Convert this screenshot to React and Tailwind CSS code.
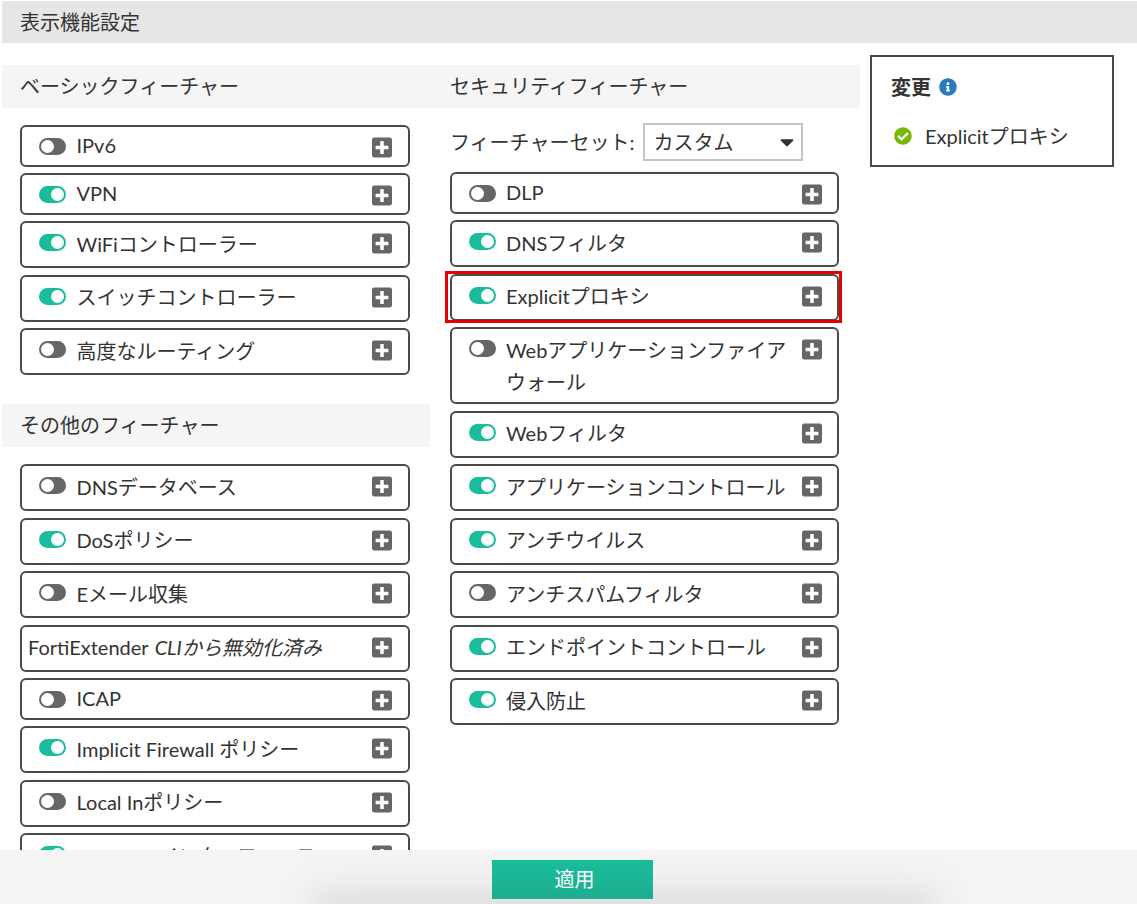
import { FaPlusSquare, FaInfoCircle, FaCheckCircle, FaCaretDown } from 'react-icons/fa';

const basic = [
  { label: 'IPv6', on: false, short: true },
  { label: 'VPN', on: true, short: true },
  { label: 'WiFiコントローラー', on: true },
  { label: 'スイッチコントローラー', on: true },
  { label: '高度なルーティング', on: false },
];

const other = [
  { label: 'DNSデータベース', on: false },
  { label: 'DoSポリシー', on: true },
  { label: 'Eメール収集', on: false },
  { label: 'FortiExtender', note: 'CLIから無効化済み', noToggle: true },
  { label: 'ICAP', on: false, short: true },
  { label: 'Implicit Firewall ポリシー', on: true },
  { label: 'Local Inポリシー', on: false },
  { label: 'SD-WANインターフェース', on: true },
];

const security = [
  { label: 'DLP', on: false, short: true },
  { label: 'DNSフィルタ', on: true },
  { label: 'Explicitプロキシ', on: true, marked: true },
  { label: 'Webアプリケーションファイアウォール', on: false, double: true },
  { label: 'Webフィルタ', on: true },
  { label: 'アプリケーションコントロール', on: true },
  { label: 'アンチウイルス', on: true },
  { label: 'アンチスパムフィルタ', on: false },
  { label: 'エンドポイントコントロール', on: true },
  { label: '侵入防止', on: true },
];

function Toggle({ on }) {
  return (
    <span className={`mt-[11px] ml-[17px] flex h-[17px] w-[27px] shrink-0 rounded-full border-[2px] ${on ? 'justify-end border-[#1abc9c] bg-[#1abc9c]' : 'justify-start border-[#666] bg-[#666]'}`}>
      <span className="h-[13px] w-[13px] rounded-full bg-white" />
    </span>
  );
}

function FeatureRow({ item, narrow }) {
  const height = item.double ? 'h-[77px]' : item.short ? 'h-[41.5px]' : 'h-[47px]';
  const textTop = item.short ? 'mt-[1.5px]' : 'mt-[4.5px]';
  const textLeft = item.noToggle ? 'ml-[6px]' : narrow ? 'ml-[10px]' : 'ml-[10.5px]';
  return (
    <div className={`relative flex shrink-0 items-start rounded-md border-2 border-[#4a4a4a] bg-white ${height}`}>
      {!item.noToggle && <Toggle on={item.on} />}
      <div className={`min-w-0 flex-1 text-[20px] leading-[32px] text-[#333] ${textTop} ${textLeft}`}>
        {item.label}
        {item.note && <em className="ml-[6px] italic">{item.note}</em>}
      </div>
      <FaPlusSquare className={`mt-[9px] ml-[4px] h-[23px] w-[20px] shrink-0 text-[#666] ${narrow ? 'mr-[15px]' : 'mr-[16px]'}`} />
      {item.marked && <div className="absolute -top-[5px] -right-[5px] -bottom-[4px] -left-[7px] border-[3px] border-[#e60000]" />}
    </div>
  );
}

function FeatureList({ items, narrow }) {
  return (
    <div className="flex flex-col gap-[6.5px]">
      {items.map(item => <FeatureRow key={item.label} item={item} narrow={narrow} />)}
    </div>
  );
}

function SectionTitle({ children, className }) {
  return (
    <div className={`h-[43px] shrink-0 bg-[#f5f5f5] text-[20px] leading-[43px] text-[#333] ${className}`}>
      {children}
    </div>
  );
}

export default function App() {
  return (
    <div className="relative flex h-[904px] w-[1137px] flex-col overflow-hidden bg-white font-[Lato,'Noto_Sans_CJK_JP',sans-serif]">
      {/* Title */}
      <div className="mt-px ml-[2px] h-[42px] shrink-0 bg-[#e6e6e6] pl-[18px] text-[20px] leading-[42px] text-[#333]">
        表示機能設定
      </div>

      <div className="flex min-h-0 flex-1 overflow-hidden">
        <div className="mt-[22px] ml-[2px] flex w-[858px] shrink-0">
          {/* Left column */}
          <div className="w-[428px] shrink-0">
            <SectionTitle className="pl-[18px]">ベーシックフィーチャー</SectionTitle>
            <div className="mt-[17px] ml-[18px] w-[390px]">
              <FeatureList items={basic} />
            </div>
            <SectionTitle className="mt-[29px] pl-[18px]">その他のフィーチャー</SectionTitle>
            <div className="mt-[17px] ml-[18px] w-[390px]">
              <FeatureList items={other} />
            </div>
          </div>

          {/* Right column */}
          <div className="w-[430px] shrink-0">
            <SectionTitle className="pl-[20px]">セキュリティフィーチャー</SectionTitle>
            <div className="mt-[15px] ml-[20px] flex h-[38px] items-center text-[20px] text-[#333]">
              <span>フィーチャーセット:</span>
              <div className="ml-[9px] flex h-[38px] w-[160px] items-center justify-between border-2 border-[#c4c4c4] pr-[6px] pl-[8px]">
                <span>カスタム</span>
                <FaCaretDown className="h-[22px] w-[16px] text-[#333]" />
              </div>
            </div>
            <div className="mt-[11px] ml-[20px] w-[389px]">
              <FeatureList items={security} narrow />
            </div>
          </div>
        </div>

        {/* Changes panel */}
        <div className="mt-[12px] ml-[10px] h-[112px] w-[244px] shrink-0 border-2 border-[#4a4a4a] pt-[16px] pl-[19px]">
          <div className="flex items-center text-[20px] leading-[28px] font-bold text-[#333]">
            変更
            <FaInfoCircle className="ml-[8px] h-[18px] w-[18px] text-[#2a7abf]" />
          </div>
          <div className="mt-[21px] ml-[3px] flex items-center text-[20px] leading-[28px] text-[#333]">
            <FaCheckCircle className="mr-[13px] h-[18px] w-[18px] text-[#78b800]" />
            Explicitプロキシ
          </div>
        </div>
      </div>

      {/* Footer */}
      <div className="relative flex h-[54px] shrink-0 justify-center overflow-hidden bg-[#f4f4f4] pt-[10px]">
        <div className="absolute -bottom-[22px] left-[310px] h-[36px] w-[630px] rounded-full bg-[#dcdcdc] blur-[16px]" />
        <button className="relative ml-[8px] h-[39px] w-[161px] bg-gradient-to-b from-[#1abc9c] to-[#1cae90] pl-[4px] text-[20px] leading-[39px] text-white">
          適用
        </button>
      </div>
    </div>
  );
}
